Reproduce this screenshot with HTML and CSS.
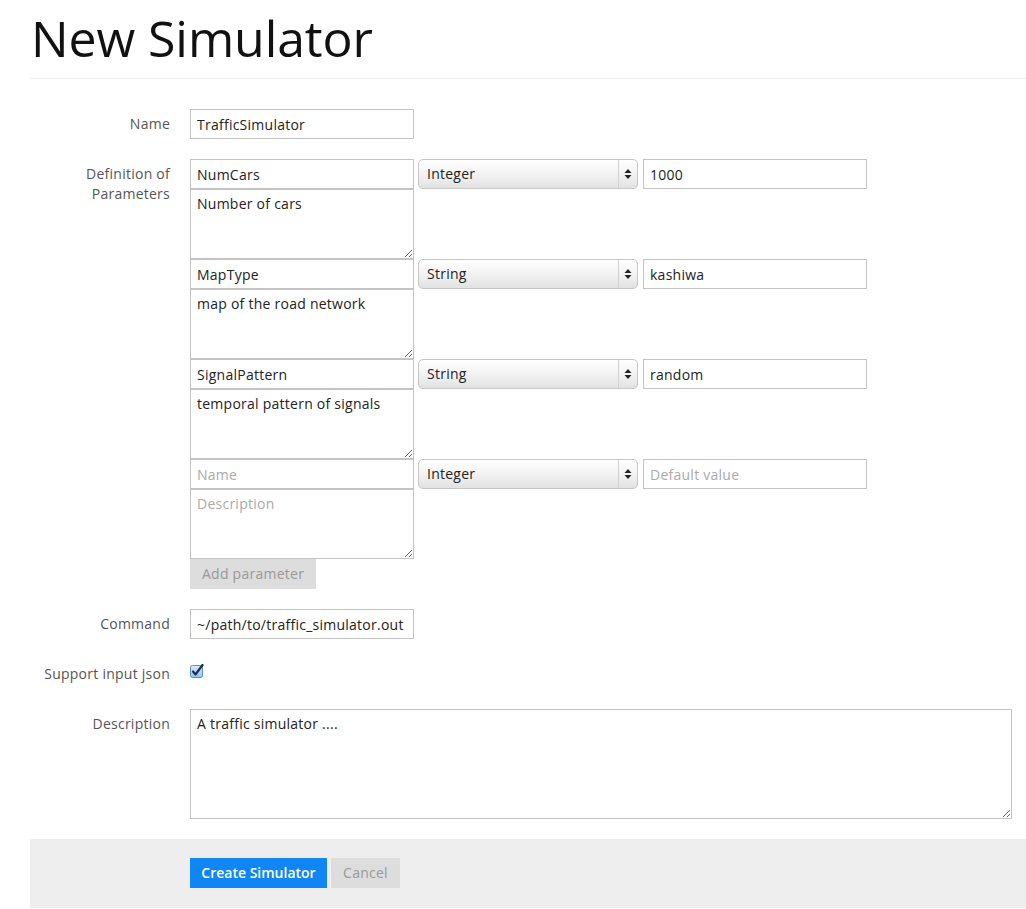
FILE: index.html
```html
<!DOCTYPE html>
<html>
<head>
<meta charset="utf-8">
<title>New Simulator</title>
<link rel="stylesheet" href="styles.css">
</head>
<body>
<div class="page">
  <h1 class="title">New Simulator</h1>
  <form class="form">
    <div class="group">
      <label class="label">Name</label>
      <div class="controls">
        <input class="input" type="text" value="TrafficSimulator">
      </div>
    </div>

    <div class="group">
      <label class="label">Definition of Parameters</label>
      <div class="controls">
        <div class="param">
          <div class="param-row">
            <input class="input" type="text" value="NumCars">
            <div class="select-wrap">
              <span class="select-text">Integer</span>
              <span class="select-arrow"><svg width="8" height="12" viewBox="0 0 8 12"><path d="M4 1 L7.5 5 H0.5 Z M4 11 L7.5 7 H0.5 Z" fill="#222"/></svg></span>
            </div>
            <input class="input" type="text" value="1000">
          </div>
          <textarea class="area">Number of cars</textarea>
        </div>
        <div class="param">
          <div class="param-row">
            <input class="input" type="text" value="MapType">
            <div class="select-wrap">
              <span class="select-text">String</span>
              <span class="select-arrow"><svg width="8" height="12" viewBox="0 0 8 12"><path d="M4 1 L7.5 5 H0.5 Z M4 11 L7.5 7 H0.5 Z" fill="#222"/></svg></span>
            </div>
            <input class="input" type="text" value="kashiwa">
          </div>
          <textarea class="area">map of the road network</textarea>
        </div>
        <div class="param">
          <div class="param-row">
            <input class="input" type="text" value="SignalPattern">
            <div class="select-wrap">
              <span class="select-text">String</span>
              <span class="select-arrow"><svg width="8" height="12" viewBox="0 0 8 12"><path d="M4 1 L7.5 5 H0.5 Z M4 11 L7.5 7 H0.5 Z" fill="#222"/></svg></span>
            </div>
            <input class="input" type="text" value="random">
          </div>
          <textarea class="area">temporal pattern of signals</textarea>
        </div>
        <div class="param">
          <div class="param-row">
            <input class="input" type="text" placeholder="Name">
            <div class="select-wrap">
              <span class="select-text">Integer</span>
              <span class="select-arrow"><svg width="8" height="12" viewBox="0 0 8 12"><path d="M4 1 L7.5 5 H0.5 Z M4 11 L7.5 7 H0.5 Z" fill="#222"/></svg></span>
            </div>
            <input class="input" type="text" placeholder="Default value">
          </div>
          <textarea class="area" placeholder="Description"></textarea>
        </div>
        <button type="button" class="btn btn-muted">Add parameter</button>
      </div>
    </div>

    <div class="group">
      <label class="label">Command</label>
      <div class="controls">
        <input class="input" type="text" value="~/path/to/traffic_simulator.out">
      </div>
    </div>

    <div class="group">
      <label class="label">Support input json</label>
      <div class="controls">
        <span class="checkbox"><svg width="14" height="14" viewBox="0 0 14 14">
          <defs><linearGradient id="cb" x1="0" y1="0" x2="0" y2="1"><stop offset="0" stop-color="#d9ecfd"/><stop offset="1" stop-color="#8cc4f5"/></linearGradient></defs>
          <rect x="0.5" y="1.5" width="12" height="12" rx="2" fill="url(#cb)" stroke="#5b8fc4"/>
          <path d="M3 7.5 L5.5 10.5 L12.5 1" fill="none" stroke="#1b2f55" stroke-width="2.2" stroke-linecap="round" stroke-linejoin="round"/>
        </svg></span>
      </div>
    </div>

    <div class="group">
      <label class="label">Description</label>
      <div class="controls">
        <textarea class="area area-wide">A traffic simulator ....</textarea>
      </div>
    </div>

    <div class="actions">
      <button type="button" class="btn btn-primary">Create Simulator</button>
      <button type="button" class="btn btn-muted">Cancel</button>
    </div>
  </form>
</div>
</body>
</html>
```
FILE: styles.css
```css
html, body {
  margin: 0;
  padding: 0;
  background: #fff;
}
body {
  font-family: "Open Sans", "DejaVu Sans", sans-serif;
  font-size: 14px;
  line-height: 20px;
  color: #333;
  letter-spacing: 0.25px;
}
.page {
  padding-left: 30px;
}
.title {
  margin: 0;
  padding-left: 1px;
  font-size: 50px;
  font-weight: 400;
  line-height: 76px;
  height: 79px;
  box-sizing: border-box;
  padding-bottom: 3px;
  color: #111;
  border-bottom: 1px solid #eee;
  letter-spacing: -0.1px;
}
.form {
  margin: 30px 0 0 0;
}
.group {
  display: flex;
  margin-bottom: 20px;
}
.label {
  width: 140px;
  margin-right: 20px;
  text-align: right;
  padding-top: 5px;
  color: #555;
  flex-shrink: 0;
}
.controls {
  display: flex;
  flex-direction: column;
  align-items: flex-start;
}
.input {
  box-sizing: border-box;
  width: 224px;
  height: 30px;
  margin: 0;
  padding: 4px 6px;
  border: 1px solid #c4c4c4;
  border-radius: 0;
  font-family: inherit;
  font-size: 14px;
  letter-spacing: 0.25px;
  line-height: 20px;
  color: #222;
  background: #fff;
  outline: none;
}
.input::placeholder, .area::placeholder {
  color: #aaa;
}
.param {
  display: flex;
  flex-direction: column;
}
.param-row {
  display: flex;
  gap: 4px;
}
.select-wrap {
  position: relative;
  box-sizing: border-box;
  width: 220px;
  height: 30px;
  border: 1px solid #c6c6c6;
  border-radius: 5px;
  background: linear-gradient(#ffffff, #f4f4f4 45%, #e2e2e2);
  padding: 4px 8px;
  color: #222;
  margin-right: 1px;
}
.select-arrow {
  position: absolute;
  top: 0;
  right: 0;
  width: 18px;
  height: 28px;
  border-left: 1px solid #d0d0d0;
  display: flex;
  align-items: center;
  justify-content: center;
}
.select-arrow svg {
  display: block;
}
.area {
  box-sizing: border-box;
  width: 224px;
  height: 70px;
  margin: 0;
  padding: 4px 6px;
  border: 1px solid #c4c4c4;
  border-radius: 0;
  font-family: inherit;
  font-size: 14px;
  letter-spacing: 0.25px;
  line-height: 20px;
  color: #222;
  background: #fff;
  outline: none;
  display: block;
}
.area-wide {
  width: 822px;
  height: 110px;
}
.btn {
  box-sizing: border-box;
  height: 30px;
  border: 0;
  margin: 0;
  padding: 0 12px;
  font-family: inherit;
  font-size: 14px;
  letter-spacing: 0.25px;
  line-height: 30px;
  cursor: pointer;
}
.btn-muted {
  background: #dddddd;
  color: #999;
}
.btn-primary {
  background: #0f86f4;
  color: #fff;
  font-weight: 600;
  letter-spacing: 0;
  width: 137px;
  padding: 0;
}
.checkbox {
  display: block;
  padding-top: 5px;
  height: 30px;
  box-sizing: border-box;
}
.checkbox svg {
  display: block;
}
.actions {
  background: #eeeeee;
  padding: 19px 0 20px 160px;
  display: flex;
  gap: 4px;
}
.actions .btn-muted {
  width: 69px;
  padding: 0;
}
```
